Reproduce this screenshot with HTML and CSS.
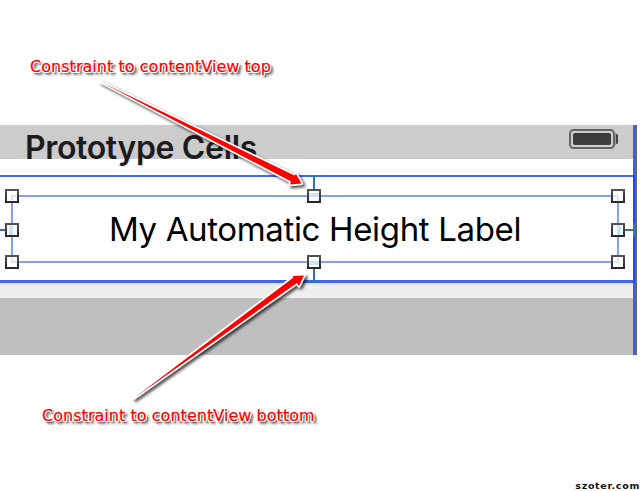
FILE: index.html
```
<!DOCTYPE html>
<html lang="en">
<head>
    <meta charset="UTF-8">
    <meta name="viewport" content="width=device-width, initial-scale=1.0">
    <title>Automatic Height Label</title>
    <link rel="stylesheet" href="styles.css">
</head>
<body>
    <div class="page">
        <p class="note note-top"><span>Constraint to contentView top</span></p>

        <!-- storyboard canvas -->
        <main class="canvas">
            <div class="screen">
                <header class="status-bar">
                    <h1>Prototype Cells</h1>
                    <svg class="battery" width="51" height="20" viewBox="0 0 51 20">
                        <rect x="1" y="1" width="44" height="18" rx="3.5" fill="none" stroke="#666" stroke-width="2"/>
                        <rect x="4" y="4" width="38" height="12" rx="2" fill="#3c3c3c"/>
                        <path d="M46 4h1v12h-1z" fill="#999"/>
                        <path d="M47 5h1l1 1v8l-1 1h-1z" fill="#444"/>
                    </svg>
                </header>
                <section class="cell">
                    <div class="label">My Automatic Height Label</div>
                </section>
                <div class="separator"></div>
                <div class="table-rest"></div>
            </div>
            <div class="edge"></div>
        </main>

        <p class="note note-bottom"><span>Constraint to contentView bottom</span></p>
        <footer>szoter.com</footer>

        <!-- constraints, handles and arrows over the canvas -->
        <svg class="overlay" width="640" height="491" viewBox="0 0 640 491">
            <defs>
                <linearGradient id="ink" x1="0" y1="0" x2="0" y2="1">
                    <stop offset="0" stop-color="#555"/>
                    <stop offset="1" stop-color="#262626"/>
                </linearGradient>
                <g id="handle">
                    <rect width="14" height="14" fill="url(#ink)"/>
                    <rect x="2" y="2" width="10" height="10" fill="#fff"/>
                </g>
            </defs>
            <path d="M633 175h2v108h-2z" fill="#1f49ff"/>
            <g fill="#2b76b8">
                <rect x="307" y="175" width="14" height="2"/>
                <rect x="313" y="175" width="2" height="16"/>
                <rect x="307" y="281" width="14" height="2"/>
                <rect x="313" y="267" width="2" height="15"/>
                <rect x="0" y="229" width="7" height="2"/>
                <rect x="623" y="229" width="10" height="2"/>
                <rect x="633" y="223" width="2" height="14"/>
            </g>
            <use href="#handle" x="5" y="189"/>
            <use href="#handle" x="307" y="189"/>
            <use href="#handle" x="611" y="189"/>
            <use href="#handle" x="5" y="223"/>
            <use href="#handle" x="611" y="223"/>
            <use href="#handle" x="5" y="255"/>
            <use href="#handle" x="307" y="255"/>
            <use href="#handle" x="611" y="255"/>
            <g fill="#dfe6ff">
                <path d="M11 195h6v2h-4v4h-2zM613 195h6v6h-2v-4h-4z"/>
                <path d="M11 257h2v4h4v2h-6zM617 257h2v6h-6v-2h4z"/>
                <path fill="#d0e3f0" d="M9 225h4v10h-4zM617 225h4v10h-4zM309 193h10v4h-10zM309 261h10v4h-10z"/>
            </g>
            <g class="arrows">
                <path class="halo" d="M101 82L294.500 175.500L296 174L301.500 183.500L290 184.500L291 181.500Z"/>
                <path class="halo" d="M134 398L293.500 277.500L292.500 276L304 275.500L299 286L297 283Z"/>
            </g>
            <path class="arrow" d="M101 82L294.500 175.500L296 174L301.500 183.500L290 184.500L291 181.500Z"/>
            <path class="arrow" d="M134 398L293.500 277.500L292.500 276L304 275.500L299 286L297 283Z"/>
        </svg>
    </div>
</body>
</html>
```
FILE: styles.css
```
* {
    box-sizing: border-box;
}

body {
    margin: 0;
    background: #fff;
    font-family: "Inter", sans-serif;
}

.page {
    position: relative;
    display: flex;
    flex-direction: column;
    width: 640px;
    height: 491px;
    overflow: hidden;
}

/* annotations */
.note {
    margin: 0;
    font-family: "DejaVu Sans", sans-serif;
    font-size: 16px;
    line-height: 20px;
    letter-spacing: 0.04px;
    white-space: nowrap;
    color: #f00;
    -webkit-text-stroke: 0.2px #f00;
    text-shadow: 1px 0 #fff, -1px 0 #fff, 0 1px #fff, 0 -1px #fff,
        1px 1px #fff, -1px -1px #fff, 1px -1px #fff, -1px 1px #fff,
        2px 2px 2px #333, 3px 3px 3px #777;
}

.note-top {
    height: 125px;
    padding: 57px 0 0 30px;
}

.note-bottom {
    height: 123px;
    padding: 51px 0 0 42px;
}

/* storyboard */
.canvas {
    display: flex;
    width: 637px;
    height: 230px;
}

.screen {
    display: flex;
    flex-direction: column;
    width: 633px;
}

.status-bar {
    display: flex;
    justify-content: space-between;
    height: 50px;
    padding: 4px 13px 0 25px;
    background: linear-gradient(#ccc 34px, #fff 34px);
}

.status-bar h1 {
    margin: 0;
    font-size: 32px;
    font-weight: 600;
    line-height: 37px;
    letter-spacing: -0.35px;
    color: #1c1c1e;
}

.cell {
    height: 108px;
    padding: 18px 14px 18px 11px;
    border-top: 2px solid #4169ff;
    border-bottom: 3px solid #4565e8;
    background: #fff;
}

.label {
    height: 68px;
    border: 2px solid #879eff;
    font-size: 33px;
    line-height: 65px;
    letter-spacing: -0.35px;
    text-align: center;
    white-space: nowrap;
    color: #000;
}

.separator {
    height: 15px;
    background: linear-gradient(#dcdcdc, #efefef 3px);
}

.table-rest {
    flex: 1;
    background: #bfbfbf;
}

.edge {
    width: 4px;
    border-left: 2px solid #3d5fe0;
    background: #666;
}

footer {
    margin-top: auto;
    font-family: "DejaVu Sans", sans-serif;
    font-size: 9.5px;
    font-weight: bold;
    line-height: 11px;
    letter-spacing: 0.7px;
    text-align: right;
    color: #111;
}

.overlay {
    position: absolute;
    top: 0;
    left: 0;
}

.arrows {
    filter: drop-shadow(2px 2px 1.5px rgba(0, 0, 0, 0.7));
}

.halo {
    fill: #fff;
    stroke: #fff;
    stroke-width: 3.5;
    stroke-linejoin: round;
}

.arrow {
    fill: #f00;
}
```
